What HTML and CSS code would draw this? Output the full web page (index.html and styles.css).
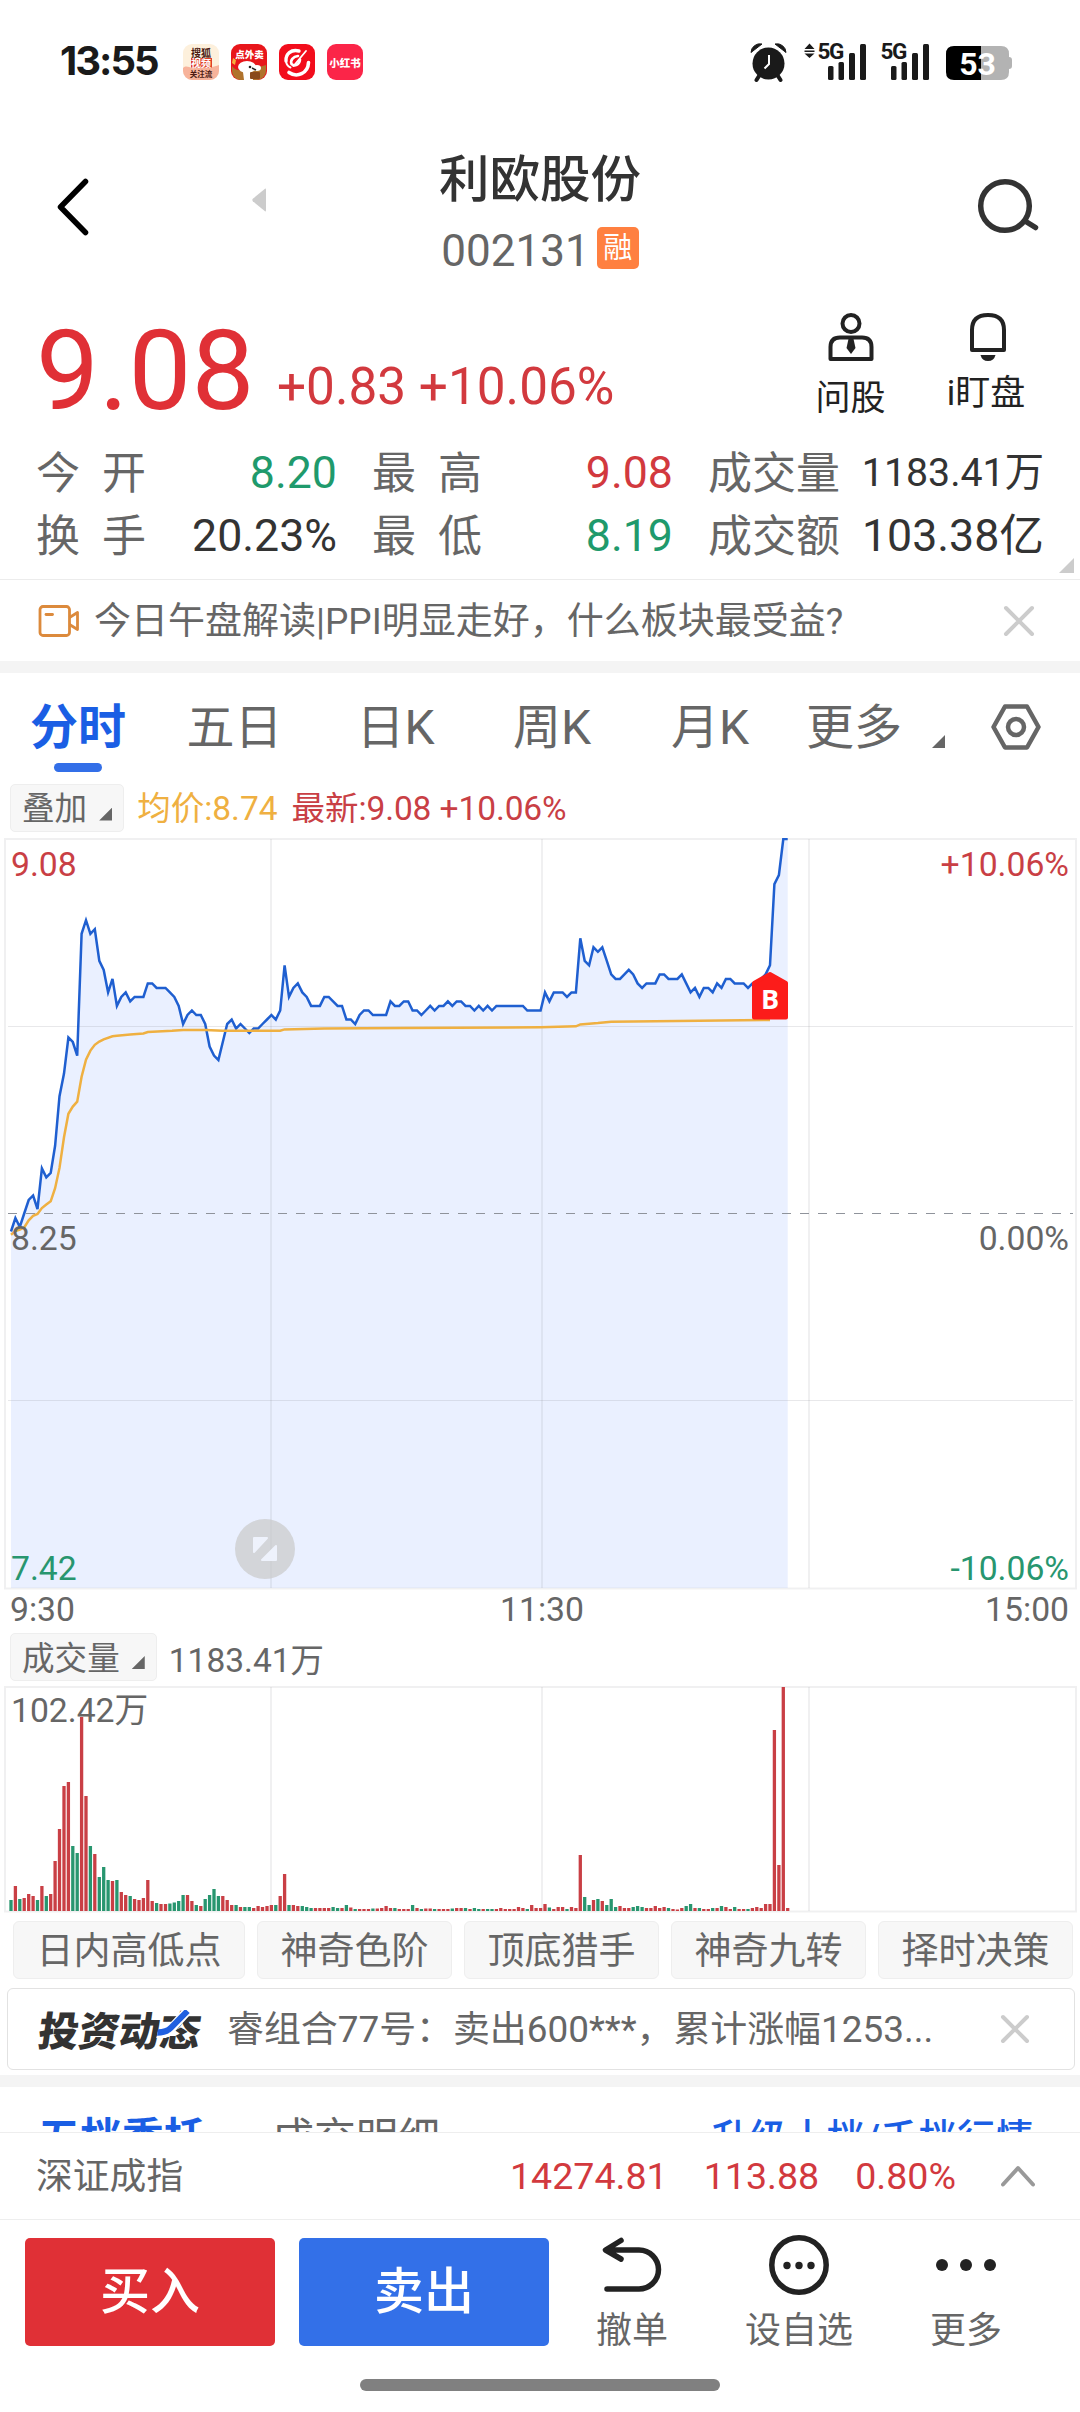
FILE: index.html
```html
<!DOCTYPE html>
<html lang="zh-CN">
<head>
<meta charset="utf-8">
<title>利欧股份 002131</title>
<link rel="stylesheet" href="styles.css">
</head>
<body>
<div class="screen">

  <header class="status">
    <span class="clock">13:55</span>
    <div class="apps">
      <svg width="36" height="36" viewBox="0 0 36 36">
        <rect width="36" height="36" rx="9" fill="#fdf0dc"/>
        <path d="M0 24c4-4 7 1 11-1s14 3 25-2v6a9 9 0 0 1-9 9H9a9 9 0 0 1-9-9z" fill="#f7b39b"/>
        <rect x="8" y="14" width="21" height="9.500" fill="#e0402a"/>
        <text class="app-word" x="18" y="12.500" fill="#4a1a12">搜狐</text>
        <text class="app-word" x="18" y="22.500" fill="#fff">视频</text>
        <text class="app-word app-word-s" x="18" y="32.500" fill="#4a1a12">关注流</text>
      </svg>
      <svg width="36" height="36" viewBox="0 0 36 36">
        <rect width="36" height="36" rx="9" fill="#e8161b"/>
        <path d="M1 22q3 5 10 4l14-2 10-3v6a9 9 0 0 1-9 9H9a9 9 0 0 1-8-9z" fill="#b0732c"/>
        <ellipse cx="16" cy="23" rx="9" ry="6" fill="#fff"/>
        <ellipse cx="26" cy="24" rx="4" ry="3" fill="#fff"/>
        <path d="M12 28h9l1 8h-9z" fill="#fff"/>
        <circle cx="19" cy="23" r="1.300" fill="#222"/>
        <path d="M21 24l4 2" stroke="#222" stroke-width="1.500"/>
        <rect x="19" y="28" width="10" height="7" rx="1" fill="#8a4a1c"/>
        <path d="M2 14l3 2-1 5-3-2z" fill="#f5b13c"/>
        <text class="app-word app-word-b" x="18.500" y="13.500" fill="#fff">点外卖</text>
      </svg>
      <svg width="36" height="36" viewBox="0 0 36 36">
        <rect width="36" height="36" rx="9" fill="#f20d1c"/>
        <g fill="none" stroke="#fff" stroke-linecap="round">
          <path d="M20 7C12 5 6.500 10 7 17" stroke-width="3.400"/>
          <path d="M7 17c.4 3.500 2 5.500 4.500 6.500" stroke-width="2"/>
          <path d="M10 28.500c8 5.500 19 1 19.500-10" stroke-width="3.600"/>
          <path d="M19 12c-5 .5-8 4.500-6.500 8 3 3 8 .5 8.500-4.500" stroke-width="2.600"/>
          <path d="M27 7L14.500 22" stroke-width="1.800"/>
        </g>
      </svg>
      <svg width="36" height="36" viewBox="0 0 36 36">
        <rect width="36" height="36" rx="9" fill="#fb2548"/>
        <text class="app-word app-word-r" x="18" y="22.500" fill="#fff">小红书</text>
      </svg>
    </div>
    <svg class="system" width="270" height="50" viewBox="746 36 270 50">
      <g fill="#1a1a1a">
        <circle cx="768.500" cy="63.500" r="16"/>
        <path d="M751 52.500a9 9 0 0 1 11-8.500zM786 52.500a9 9 0 0 0-11-8.500z" stroke="#1a1a1a" stroke-width="1"/>
        <path d="M759 76l-2.500 4M778 76l2.500 4" stroke="#1a1a1a" stroke-width="4" stroke-linecap="round"/>
        <path d="M769 55v9l-4.500 4.500" fill="none" stroke="#fff" stroke-width="2"/>
        <path d="M809.500 43.500l5 5.500h-10zM809.500 58l5-4.500h-10z"/>
        <rect x="804.500" y="50.500" width="10" height="1.500"/>
        <text class="net" x="817.500" y="59">5G</text>
        <rect x="828" y="66" width="5.500" height="14" rx="1.500"/>
        <rect x="838.500" y="62" width="5.500" height="18" rx="1.500"/>
        <rect x="849" y="53" width="6" height="27" rx="1.500"/>
        <rect x="860" y="44" width="6" height="36" rx="1.500"/>
        <text class="net" x="880.500" y="59">5G</text>
        <rect x="891" y="66" width="5.500" height="14" rx="1.500"/>
        <rect x="901.500" y="62" width="5.500" height="18" rx="1.500"/>
        <rect x="912" y="53" width="6" height="27" rx="1.500"/>
        <rect x="923" y="44" width="6" height="36" rx="1.500"/>
      </g>
      <path d="M981 46h20q8 0 8 8v3q3 0 3 3v6q0 3-3 3v3q0 8-8 8h-20z" fill="#b3b3b3"/>
      <path d="M981 46h-27q-8 0-8 8v18q0 8 8 8h27z" fill="#000"/>
      <text class="charge" x="977.500" y="74.500">53</text>
    </svg>
  </header>

  <nav class="titlebar">
    <div class="title-left">
      <svg width="32" height="58" viewBox="0 0 32 58"><path d="M28.500 3.500L3.500 29l25 25.500" fill="none" stroke="#000" stroke-width="5.500" stroke-linecap="round" stroke-linejoin="round"/></svg>
      <svg class="prev" width="14" height="24" viewBox="0 0 14 24"><path d="M13 .8Q14 0 14 2v20q0 2-1 1.200L.8 13.200q-1-1.200 0-2.400z" fill="#ccc"/></svg>
    </div>
    <div class="title-mid">
      <h1>利欧股份</h1>
      <div class="code"><span>002131</span><span class="badge">融</span></div>
    </div>
    <div class="title-right">
      <svg width="62" height="58" viewBox="977 178 62 58"><g fill="none" stroke="#333" stroke-width="5.500"><circle cx="1005" cy="206" r="24.300"/><path d="M1025 221l10.500 6.500" stroke-linecap="round"/></g></svg>
    </div>
  </nav>

  <section class="quote">
    <div class="price-row">
      <span class="price">9.08</span>
      <span class="change">+0.83 +10.06%</span>
      <div class="actions">
        <div class="action">
          <svg width="48" height="50" viewBox="826 312 48 50"><g fill="none" stroke="#222" stroke-width="4"><circle cx="850" cy="323.500" r="8.500"/><path d="M829.500 359v-12q0-9.500 9.500-9.500h22q9.500 0 9.500 9.500v12z" stroke-linejoin="round"/></g><path d="M847.500 339h5l2 9-4.500 6-4.500-6z" fill="#222"/></svg>
          <span>问股</span>
        </div>
        <div class="action action-watch">
          <svg width="40" height="50" viewBox="967 312 40 50"><path d="M971 350v-20q0-15 16-15t16 15v20z" fill="none" stroke="#222" stroke-width="4" stroke-linejoin="round"/><path d="M979.500 355h15q-1.500 6-7.500 6t-7.500-6z" fill="#222"/></svg>
          <span>i盯盘</span>
        </div>
      </div>
    </div>
    <div class="stats">
      <div class="stat wide"><span>今开</span><b class="down">8.20</b></div>
      <div class="stat wide"><span>最高</span><b class="up">9.08</b></div>
      <div class="stat"><span>成交量</span><b class="small">1183.41万</b></div>
      <div class="stat wide"><span>换手</span><b>20.23%</b></div>
      <div class="stat wide"><span>最低</span><b class="down">8.19</b></div>
      <div class="stat"><span>成交额</span><b>103.38亿</b></div>
    </div>
    <i class="corner corner-quote"></i>
  </section>

  <section class="banner">
    <svg width="42" height="34" viewBox="0 0 42 34"><g fill="none" stroke="#dc8a3c" stroke-width="2.800" stroke-linejoin="round"><rect x="2" y="2.500" width="29.500" height="29" rx="3"/><path d="M31.500 13.500l8-5v17l-8-5"/><path d="M8 10.500h6.500" stroke-linecap="round"/></g></svg>
    <p>今日午盘解读|PPI明显走好，什么板块最受益?</p>
    <svg class="close" width="32" height="32" viewBox="0 0 32 32"><path d="M3 3l26 26M29 3L3 29" stroke="#ccc" stroke-width="4" stroke-linecap="round"/></svg>
  </section>
  <div class="band"></div>

  <nav class="tabs">
    <span class="tab active">分时</span>
    <span class="tab">五日</span>
    <span class="tab">日K</span>
    <span class="tab">周K</span>
    <span class="tab">月K</span>
    <span class="tab more">更多<i class="corner corner-dark"></i></span>
    <svg width="52" height="48" viewBox="0 0 52 48"><g fill="none" stroke="#666" stroke-width="4.500" stroke-linejoin="round"><path d="M15 3.500h22L48.500 24 37 44.500H15L3.500 24z"/><circle cx="26" cy="24" r="8"/></g></svg>
  </nav>

  <div class="legend">
    <span class="pill">叠加<i class="corner corner-dark"></i></span>
    <span class="avg">均价:8.74</span>
    <span class="latest">最新:9.08 +10.06%</span>
  </div>

  <svg class="chart" width="1080" height="794" viewBox="0 838 1080 794">
    <path id="price-area" fill="#eaf0ff"/>
    <g class="frame">
      <rect x="5" y="839" width="1071" height="749.500"/>
      <path d="M271 839v749M542 839v749M809 839v749"/>
      <path class="thin" d="M8 1026.500h1065M8 1400.500h1065"/>
    </g>
    <path d="M8 1213.500h1065" stroke="#8f939b" stroke-dasharray="9 9" fill="none"/>
    <polyline id="price-line" class="line" stroke="#1f5fd0"/>
    <polyline id="avg-line" class="line" stroke="#efb041"/>
    <path d="M754 983l16-9 16 9v34.500h-32z" fill="#fc1c1a" stroke="#fc1c1a" stroke-width="4" stroke-linejoin="round"/>
    <text class="buy" x="770" y="1009">B</text>
    <g class="axis">
      <text class="t-up" x="11" y="876">9.08</text>
      <text x="11" y="1250">8.25</text>
      <text class="t-down" x="11" y="1580">7.42</text>
      <text class="t-up end" x="1069" y="876">+10.06%</text>
      <text class="end" x="1069" y="1250">0.00%</text>
      <text class="t-down end" x="1069" y="1580">-10.06%</text>
      <text x="10" y="1621">9:30</text>
      <text class="mid" x="542" y="1621">11:30</text>
      <text class="end" x="1069" y="1621">15:00</text>
    </g>
    <circle cx="265" cy="1549" r="30" fill="#c9c9c9" opacity=".7"/>
    <path d="M254 1538h13l-13 14zM276 1546v14h-14z" fill="#eef2fc" stroke="#eef2fc" stroke-width="2" stroke-linejoin="round"/>
  </svg>

  <div class="legend legend-vol">
    <span class="pill">成交量<i class="corner corner-dark"></i></span>
    <span class="vol">1183.41万</span>
  </div>

  <svg class="volume" width="1080" height="229" viewBox="0 1685 1080 229">
    <g class="frame">
      <rect x="5" y="1687" width="1071" height="224.500"/>
      <path d="M271 1687v224M542 1687v224M809 1687v224"/>
    </g>
    <text class="axis" x="11" y="1722">102.42万</text>
    <path id="vol-up" stroke="#c93f45" stroke-width="3.300"/>
    <path id="vol-down" stroke="#28966f" stroke-width="3.300"/>
  </svg>

  <div class="chips">
    <span>日内高低点</span><span>神奇色阶</span><span>顶底猎手</span><span>神奇九转</span><span>择时决策</span>
  </div>

  <section class="news">
    <div class="logo">投资动态<svg width="40" height="28" viewBox="0 0 40 28"><path d="M2 24q8 1 13-5L28 2" fill="none" stroke="#fff" stroke-width="10"/><path d="M2 22.500q9 0 13-5L29 1" fill="none" stroke="#1f5fe0" stroke-width="6.500"/></svg></div>
    <p>睿组合77号：卖出600***，累计涨幅1253...</p>
    <svg class="close" width="30" height="30" viewBox="0 0 30 30"><path d="M3 3l24 24M27 3L3 27" stroke="#ccc" stroke-width="4" stroke-linecap="round"/></svg>
  </section>
  <div class="band"></div>

  <section class="orders">
    <span class="order-on">五档委托</span>
    <span class="order-off">成交明细</span>
    <span class="upgrade">升级十档/千档行情</span>
  </section>

  <section class="index">
    <span class="index-name">深证成指</span>
    <span>14274.81</span><span>113.88</span><span>0.80%</span>
    <svg width="36" height="24" viewBox="0 0 36 24"><path d="M3 20.500L18 4l15 16.500" fill="none" stroke="#999" stroke-width="4" stroke-linecap="round" stroke-linejoin="round"/></svg>
  </section>

  <footer class="trade">
    <button class="btn btn-buy">买入</button>
    <button class="btn btn-sell">卖出</button>
    <div class="tool">
      <svg width="60" height="60" viewBox="603 2235 60 60"><path d="M622 2240.500l-15.500 9.500 15.500 9M607 2250h33a19.500 19.500 0 0 1 0 39h-32" fill="none" stroke="#222" stroke-width="5.500" stroke-linecap="round" stroke-linejoin="round"/></svg>
      <span>撤单</span>
    </div>
    <div class="tool tool-fav">
      <svg width="60" height="60" viewBox="769 2235 60 60"><circle cx="799" cy="2265" r="27.200" fill="none" stroke="#222" stroke-width="5.500"/><g fill="#222"><circle cx="787" cy="2265.500" r="3.700"/><circle cx="799" cy="2265.500" r="3.700"/><circle cx="811" cy="2265.500" r="3.700"/></g></svg>
      <span>设自选</span>
    </div>
    <div class="tool">
      <svg width="66" height="60" viewBox="933 2235 66 60"><g fill="#222"><circle cx="942" cy="2265" r="6"/><circle cx="966" cy="2265" r="6"/><circle cx="990" cy="2265" r="6"/></g></svg>
      <span>更多</span>
    </div>
  </footer>
  <div class="home"></div>
</div>
<script src="chart.js"></script>
</body>
</html>
```
FILE: styles.css
```css
* { box-sizing: border-box; }
body {
  margin: 0;
  background: #fff;
  color: #333;
  font-family: Roboto, "Noto Sans CJK SC", sans-serif;
}
h1, p { margin: 0; font-weight: 400; }
svg { display: block; flex: none; }
.screen {
  width: 1080px;
  height: 2412px;
  overflow: hidden;
  display: flex;
  flex-direction: column;
}
.screen > * { flex: none; }
.screen span, .screen p, .screen b { white-space: nowrap; }

/* status bar */
.status {
  height: 122px;
  padding: 36px 64px 0 60px;
  display: flex;
  align-items: flex-start;
}
.clock {
  width: 123px;
  font: 700 40px/50px Inter, sans-serif;
  letter-spacing: -2px;
  color: #1a1a1a;
}
.apps { display: flex; gap: 12px; padding-top: 8px; }
.app-word {
  font-family: "Noto Sans CJK SC", sans-serif;
  font-size: 10px;
  font-weight: 700;
  text-anchor: middle;
}
.app-word-s { font-size: 7.500px; }
.app-word-b { font-size: 9.500px; font-weight: 900; }
.app-word-r { font-size: 10.500px; font-weight: 900; }
.system { margin-left: auto; }
.net { font: 700 22.500px Roboto, sans-serif; letter-spacing: -1.500px; }
.charge { font: 700 32px Roboto, sans-serif; fill: #fff; text-anchor: middle; }

/* title bar */
.titlebar {
  height: 178px;
  padding: 28px 41px 0 57px;
  display: flex;
  justify-content: space-between;
}
.title-left, .title-right { width: 320px; display: flex; padding-top: 28px; }
.title-right { justify-content: flex-end; }
.title-left { gap: 163px; }
.prev { margin-top: 10px; }
.title-mid { width: 240px; margin-left: 13px; margin-right: 29px; display: flex; flex-direction: column; align-items: center; gap: 16px; }
h1 { font-size: 50.500px; line-height: 60px; font-weight: 500; white-space: nowrap; }
.code { display: flex; align-items: center; gap: 7px; font-size: 44px; line-height: 50px; color: #666; }
.badge {
  width: 42px;
  height: 42px;
  margin-top: -6px;
  border-radius: 5px;
  background: #ff8040;
  color: #fff;
  font-size: 29px;
  line-height: 43px;
  text-align: center;
}

/* quote */
.quote { position: relative; height: 279px; padding-left: 37px; }
.price-row { height: 142px; display: flex; align-items: flex-start; color: #e03036; }
.price { width: 241px; font-size: 112px; line-height: 142px; margin-left: -1px; }
.change { font-size: 51.300px; line-height: 142px; padding-top: 16px; color: #d2393e; }
.actions { margin-left: auto; display: flex; padding: 12px 34px 0 0; }
.action {
  width: 137px;
  display: flex;
  flex-direction: column;
  align-items: center;
  color: #222;
  font-size: 35px;
  line-height: 40px;
  gap: 17px;
}
.action-watch { gap: 12px; margin-right: -10px; }
.action-watch span { margin-left: -3px; }
.stats {
  display: grid;
  grid-template-columns: 300px 300px 335px;
  column-gap: 36px;
  grid-auto-rows: 63px;
}
.stat { display: flex; justify-content: space-between; font-size: 44px; line-height: 63px; color: #666; }
.stat span { margin-left: -1px; padding-top: 1px; }
.stat.wide span { letter-spacing: 22px; }
.stat b { font-weight: 400; font-size: 44.700px; color: #333; }
.stat b.small { font-size: 39.300px; }
.stat b.up { color: #d2393e; }
.stat b.down { color: #1f9a6c; }
.corner { display: block; width: 13px; height: 13px; clip-path: polygon(100% 0, 100% 100%, 0 100%); background: #666; }
.corner-quote { position: absolute; right: 6px; bottom: 6px; width: 15px; height: 15px; background: #ccc; }

/* notice */
.banner {
  height: 82px;
  border-top: 1px solid #ececec;
  padding: 0 45px 0 38px;
  display: flex;
  align-items: center;
  font-size: 37px;
  color: #666;
}
.banner p { margin-left: 14px; padding-top: 2px; line-height: 79px; }
.close { margin-left: auto; }
.band { height: 12px; background: #f4f4f4; }

/* period tabs */
.tabs {
  height: 111px;
  display: grid;
  grid-template-columns: 156px 157px 165px 148px 168px 196px 52px;
  padding-top: 25px;
  align-items: start;
}
.tab { position: relative; font-size: 48px; line-height: 60px; color: #666; text-align: center; }
.tabs svg { margin-top: 5px; }
.active { color: #1a5ee4; font-weight: 700; }
.active::after {
  content: "";
  display: block;
  width: 48px;
  height: 9px;
  border-radius: 5px;
  background: #336fe8;
  margin: 5px auto 0;
}
.more { display: flex; padding-left: 12px; gap: 30px; }
.more .corner { margin-top: 37px; }

/* indicator legends */
.legend { height: 54px; padding-left: 10px; display: flex; align-items: flex-start; font-size: 33.500px; line-height: 49px; }
.pill {
  display: flex;
  align-items: center;
  height: 48px;
  padding: 3px 11px 0 11px;
  border: 1px solid #eee;
  border-radius: 5px;
  background: #f7f7f7;
  color: #666;
  font-size: 32.600px;
}
.pill .corner { margin: 9px 0 0 12px; }
.avg { color: #efb041; margin-left: 13px; }
.latest { color: #c93f45; margin-left: 14px; letter-spacing: -.1px; }
.legend-vol { height: 53px; padding-top: 1px; }
.legend-vol span { padding-top: 4px; }
.legend-vol .corner { margin-top: 7px; }
.vol { color: #666; margin-left: 12px; line-height: 47px; }

/* charts */
.frame { fill: none; stroke: #8c8c96; stroke-opacity: .13; stroke-width: 2; }
.frame .thin { stroke-width: 1; stroke-opacity: .2; }
.line { fill: none; stroke-width: 2.500; }
.axis { font-size: 33.700px; fill: #666; }
.t-up { fill: #c93f45; }
.t-down { fill: #28966f; }
.mid { text-anchor: middle; }
.end { text-anchor: end; }
.buy { font: 700 27px "Open Sans", sans-serif; fill: #fff; text-anchor: middle; }

/* strategy chips */
.chips { height: 74px; padding: 7px 7px 0 13px; display: grid; grid-template-columns: 232px repeat(4, 195px); gap: 12px; }
.chips span {
  height: 58px;
  border: 1px solid #eee;
  border-radius: 6px;
  background: #f7f7f7;
  color: #666;
  font-size: 37px;
  line-height: 59px;
  text-align: center;
}

/* news card */
.news {
  height: 82px;
  margin: 0 5px 5px 7px;
  padding: 0 44px 0 31px;
  border: 1px solid #e2e2e2;
  border-radius: 6px;
  display: flex;
  align-items: center;
  font-size: 36.900px;
  color: #666;
}
.news p { margin-left: 25px; padding-top: 2px; line-height: 78px; }
.logo {
  position: relative;
  width: 163px;
  white-space: nowrap;
  font-family: "Noto Sans CJK SC", sans-serif;
  font-weight: 900;
  font-size: 40.500px;
  line-height: 78px;
  color: #333;
  transform: skewX(-8deg);
}
.logo svg { position: absolute; left: 117px; top: 20px; }

/* order book heading, cut off by the fixed bottom bars */
.orders {
  height: 45px;
  overflow: hidden;
  padding: 22px 46px 0 38px;
  display: flex;
  font-size: 42px;
  line-height: 60px;
  color: #666;
}
.order-on { color: #1a5ee4; font-weight: 700; }
.order-off { margin-left: 66px; }
.upgrade { margin-left: auto; color: #1a5ee4; font-size: 38.500px; font-weight: 500; }

/* index strip */
.index {
  height: 88px;
  border: solid #eee;
  border-width: 1px 0;
  padding: 0 44px 0 36px;
  display: flex;
  align-items: center;
  gap: 36px;
  font-size: 37.600px;
  line-height: 89px;
  color: #d2393e;
}
.index-name { margin-right: auto; color: #666; font-size: 36.800px; }
.index svg { margin-left: 8px; }

/* trade bar */
.trade { height: 158px; padding: 18px 0 0 25px; display: flex; align-items: flex-start; }
.btn {
  width: 250px;
  height: 108px;
  margin: 0 24px 0 0;
  padding: 0;
  border: 0;
  border-radius: 5px;
  color: #fff;
  font: 500 50px/108px Roboto, "Noto Sans CJK SC", sans-serif;
}
.btn-buy { background: #e03036; }
.btn-sell { background: #3370e8; margin-right: 0; }
.tool {
  width: 166px;
  margin-top: -3px;
  display: flex;
  flex-direction: column;
  align-items: center;
  gap: 15px;
  color: #666;
  font-size: 36px;
  line-height: 42px;
}
.tool-fav { width: 168px; }
.home { width: 360px; height: 12px; margin: 1px auto 0; border-radius: 6px; background: #808080; }
```
FILE: chart.js
```js
// Minute series from 9:30; prices are cents above the previous close of 8.25.
const prices = [
  -4,-1,-3,0,3,4,1,10,8,9,15,26,31,39,38,35,62,65,62,63,56,54,49,52,46,48,49,47,48,48,
  48,51,51,50,50,50,49,48,46,42,44,45,44,44,42,37,35,34,38,42,43,41,42,41,40,41,41,42,43,44,
  43,45,55,48,50,51,49,48,46,46,46,48,48,47,46,46,43,43,42,44,45,45,44,44,44,44,47,46,46,47,
  47,45,45,44,45,46,45,46,46,47,46,47,47,46,46,45,46,45,46,45,46,46,46,46,46,46,46,45,45,45,
  45,49,47,49,49,49,48,49,49,61,56,55,59,58,59,56,53,52,52,53,54,53,51,50,51,51,51,53,53,52,
  52,52,53,51,49,50,48,50,50,49,51,50,52,52,51,51,51,50,51,51,52,53,55,73,75,83,83
];

// Average price as [minute, cents] knots.
const average = [
  [0,-4.7],[1,-3.9],[2,-3.6],[3,-3.1],[4,-1.5],[5,-.5],[6,-.1],[7,1.2],[8,2],[9,2.7],[10,5.6],
  [11,10.1],[12,16.9],[13,22.1],[14,23.7],[15,24.8],[16,30.3],[17,34.1],[18,36.1],[19,37.4],
  [20,38.1],[21,38.6],[23,39.3],[24,39.4],[27,39.7],[30,39.9],[31,40.2],[36.5,40.5],[39,40.7],
  [44,40.7],[48,40.5],[61,40.5],[62,40.8],[71,41],[89,41.1],[120,41.3],[128,41.5],[129,41.9],
  [133,42.2],[136,42.5],[156,42.7],[172,42.9]
];

// Volume bars: height in pixels, negative for a falling minute.
const volumes = [
  -11,25,-12,13,17,15,-11,25,-15,17,50,82,125,129,-65,-58,194,115,-65,57,-34,-44,-31,30,-31,19,16,-15,12,11,
  13,31,10,-8,7,7,-7.5,-8.5,-10,-16,16,10,-6,5,-12,-16,-22,-15,15,11,6,-6,4,-4,-4,3,5,4,5,6,
  -6,15,37,-6,6,5,-5,-4,-3,3,3,3,3,-4,-3,3,-6,3.5,-2,2,2,2,-2.5,2.5,3,5,3,-3,2,2,
  2,-6,3,-2,2.5,2.5,-2,2,2,2,-2.5,3,3,-3,2,-3,-2,2,-2,-2,2,3,2,2,2,4,3,-2,6,3,
  3,7,-3.5,2,4,4,-2,4,3,56,-14,-6,11,-12,10,-6,-12,-4,5,3,3,-4,-5,-4,3,3,5,3,4,-3,
  2,1.5,3,-5,-7,3,-3,2,2,-3,3,-5,4,2,-4,2,2,-2,3,4,3,7,7,181,46,224,3
];

const LEFT = 11, STEP = 4.413, MIDDLE = 1213.5, CENT = 4.512;
const x = i => (LEFT + i * STEP).toFixed(1);
const y = v => (MIDDLE - v * CENT).toFixed(1);

const points = prices.map((v, i) => x(i) + ',' + y(v)).join(' ');
document.getElementById('price-line').setAttribute('points', points);
document.getElementById('price-area').setAttribute('d',
  'M' + points + 'V1588H' + LEFT + 'z');
document.getElementById('avg-line').setAttribute('points',
  average.map(([i, v]) => x(i) + ',' + y(v)).join(' '));

const bars = sign => volumes
  .map((v, i) => v * sign > 0 ? 'M' + x(i) + ' 1911v' + -Math.abs(v) : '')
  .join('');
document.getElementById('vol-up').setAttribute('d', bars(1));
document.getElementById('vol-down').setAttribute('d', bars(-1));
```
